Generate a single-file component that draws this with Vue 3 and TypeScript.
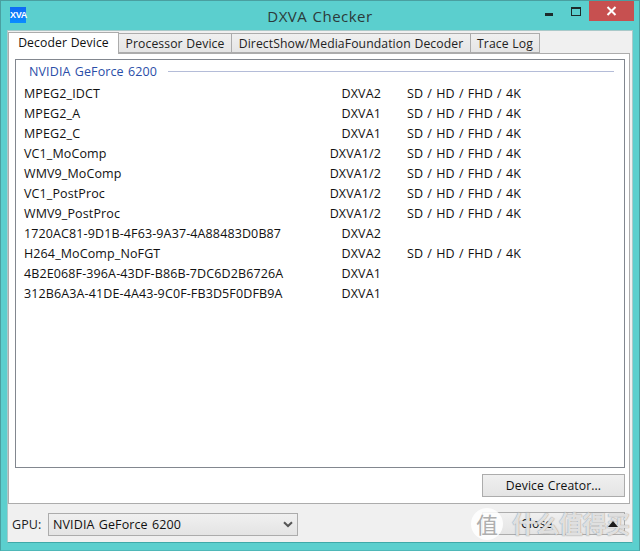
<template>
  <div class="window">
    <div class="titlebar">
      <div class="app-icon">XVA</div>
      <div class="title">DXVA Checker</div>
      <div class="controls">
        <span class="ctl-min"></span>
        <span class="ctl-max"></span>
        <span class="ctl-close">
          <svg width="11" height="10" viewBox="0 0 11 10">
            <path d="M1.5 1 L9.5 9 M9.5 1 L1.5 9" stroke="#fff" stroke-width="2" fill="none" />
          </svg>
        </span>
      </div>
    </div>
    <div class="client">
      <div class="tabs">
        <div
          v-for="(tab, i) in tabs"
          :key="tab"
          class="tab"
          :class="{ active: i === 0 }"
        >
          {{ tab }}
        </div>
      </div>
      <div class="panel">
        <div class="list-box">
          <div class="group-head">
            <span class="group-name">NVIDIA GeForce 6200</span>
            <span class="group-line"></span>
          </div>
          <div v-for="row in rows" :key="row.name" class="row">
            <span class="col-name">{{ row.name }}</span>
            <span class="col-api">{{ row.api }}</span>
            <span class="col-res">{{ row.res ? resText : '' }}</span>
          </div>
        </div>
        <div class="panel-foot">
          <button class="btn creator">Device Creator...</button>
        </div>
      </div>
      <div class="bottom">
        <span class="gpu-label">GPU:</span>
        <div class="select">
          <span>NVIDIA GeForce 6200</span>
          <svg width="10" height="7" viewBox="0 0 10 7">
            <path d="M1 1.2 L5 5 L9 1.2" stroke="#555" stroke-width="2" fill="none" />
          </svg>
        </div>
        <button class="btn close">Close</button>
      </div>
    </div>
    <div class="watermark">
      <span class="wm-circle">值</span>
      <span class="wm-text">什么值得买</span>
      <svg class="wm-mark" width="10" height="6" viewBox="0 0 10 6">
        <path d="M0 6 L5 0 L10 6 Z" fill="#1c1c1c" />
      </svg>
    </div>
  </div>
</template>

<script setup lang="ts">
interface Row {
  name: string
  api: string
  res: boolean
}

const tabs = [
  'Decoder Device',
  'Processor Device',
  'DirectShow/MediaFoundation Decoder',
  'Trace Log',
]

const resText = 'SD / HD / FHD / 4K'

const rows: Row[] = [
  { name: 'MPEG2_IDCT', api: 'DXVA2', res: true },
  { name: 'MPEG2_A', api: 'DXVA1', res: true },
  { name: 'MPEG2_C', api: 'DXVA1', res: true },
  { name: 'VC1_MoComp', api: 'DXVA1/2', res: true },
  { name: 'WMV9_MoComp', api: 'DXVA1/2', res: true },
  { name: 'VC1_PostProc', api: 'DXVA1/2', res: true },
  { name: 'WMV9_PostProc', api: 'DXVA1/2', res: true },
  { name: '1720AC81-9D1B-4F63-9A37-4A88483D0B87', api: 'DXVA2', res: false },
  { name: 'H264_MoComp_NoFGT', api: 'DXVA2', res: true },
  { name: '4B2E068F-396A-43DF-B86B-7DC6D2B6726A', api: 'DXVA1', res: false },
  { name: '312B6A3A-41DE-4A43-9C0F-FB3D5F0DFB9A', api: 'DXVA1', res: false },
]
</script>

<style>
html,
body {
  margin: 0;
  background: #5bcfce;
}
</style>

<style scoped>
.window {
  position: relative;
  width: 640px;
  height: 551px;
  box-sizing: border-box;
  background: #5bcfce;
  border: 1px solid #4a9fa0;
  border-bottom-color: #4fb8b8;
  padding: 0 6px 7px;
  display: flex;
  flex-direction: column;
  overflow: hidden;
  font-family: "Open Sans", "Noto Sans CJK SC", sans-serif;
  font-size: 12.5px;
  letter-spacing: 0.12px;
  word-spacing: 0.8px;
  color: #111;
}

.titlebar {
  height: 29px;
  flex-shrink: 0;
  display: flex;
  align-items: flex-start;
  position: relative;
}

.app-icon {
  width: 16px;
  height: 16px;
  margin: 6px 0 0 3px;
  background: linear-gradient(#0f6af5, #0a8cff);
  color: #fff;
  font: bold 9px/16px "Liberation Sans", sans-serif;
  letter-spacing: -0.3px;
  text-align: center;
}

.title {
  position: absolute;
  left: 0;
  right: 0;
  top: 5px;
  text-align: center;
  font-size: 15px;
  line-height: 20px;
  color: #2c3a3a;
  letter-spacing: 0.5px;
}

.controls {
  margin-left: auto;
  margin-right: -1px;
  display: flex;
  align-items: flex-start;
  position: relative;
}

.ctl-min {
  width: 8px;
  height: 3px;
  margin-top: 12px;
  margin-right: 18px;
  background: #1d2b2b;
}

.ctl-max {
  width: 8px;
  height: 6px;
  margin-top: 6px;
  margin-right: 8px;
  border: 1px solid #1d2b2b;
  border-top-width: 2px;
}

.ctl-close {
  width: 45px;
  height: 20px;
  background: #c75050;
  display: flex;
  align-items: center;
  justify-content: center;
}

.client {
  flex: 1;
  display: flex;
  flex-direction: column;
  background: #f0f0f0;
  border: 1px solid #a9c9c9;
  border-bottom-color: #3fa9a9;
  min-height: 0;
}

.tabs {
  display: flex;
  align-items: flex-end;
  height: 22px;
  flex-shrink: 0;
  position: relative;
  z-index: 1;
}

.tab {
  height: 20px;
  box-sizing: border-box;
  font-size: 12.2px;
  letter-spacing: 0.1px;
  word-spacing: 0.4px;
  line-height: 19px;
  text-align: center;
  background: linear-gradient(#f0f0f0, #e5e5e5);
  border: 1px solid #acacac;
  margin-left: -1px;
  color: #222;
  white-space: nowrap;
}

.tab:nth-child(1) {
  width: 111px;
}

.tab:nth-child(2) {
  width: 114px;
}

.tab:nth-child(3) {
  width: 240px;
}

.tab:nth-child(4) {
  width: 70px;
}

.tab.active {
  height: 22px;
  margin-left: 0;
  margin-bottom: -1px;
  line-height: 20px;
  background: #fff;
  border-bottom: none;
  color: #111;
  position: relative;
  z-index: 2;
}

.panel {
  height: 451px;
  flex-shrink: 0;
  width: 622px;
  box-sizing: border-box;
  background: #fff;
  border: 1px solid #acacac;
  padding: 5px 4px 0 6px;
  display: flex;
  flex-direction: column;
}

.list-box {
  height: 409px;
  box-sizing: border-box;
  border: 1px solid #82878f;
  padding: 0 10px 0 8px;
}

.group-head {
  display: flex;
  align-items: center;
  height: 22px;
  margin-bottom: 2px;
}

.group-name {
  color: #2a4ea8;
  margin-left: 5px;
}

.group-line {
  flex: 1;
  height: 1px;
  margin-left: 11px;
  background: #b4bcd8;
}

.row {
  display: flex;
  height: 20px;
  line-height: 20px;
  white-space: nowrap;
}

.col-name {
  width: 300px;
  flex-shrink: 0;
}

.col-api {
  width: 57px;
  text-align: right;
  flex-shrink: 0;
}

.col-res {
  margin-left: 26px;
}

.panel-foot {
  display: flex;
  justify-content: flex-end;
  padding-top: 6px;
}

.btn {
  font: inherit;
  font-size: 12.2px;
  letter-spacing: 0.1px;
  word-spacing: 0.4px;
  color: #111;
  background: linear-gradient(#f0f0f0, #e4e4e4);
  border: 1px solid #acacac;
  padding: 0;
}

.creator {
  width: 143px;
  height: 23px;
}

.bottom {
  flex: 1;
  display: flex;
  align-items: center;
  padding: 2px 7px 0 4px;
}

.gpu-label {
  width: 36px;
  color: #222;
}

.select {
  width: 250px;
  height: 23px;
  box-sizing: border-box;
  border: 1px solid #acacac;
  background: linear-gradient(#f0f0f0, #e4e4e4);
  display: flex;
  align-items: center;
  justify-content: space-between;
  padding: 0 4px 0 4px;
}

.close {
  width: 143px;
  height: 23px;
  margin-left: auto;
  margin-top: -2px;
  text-align: left;
  padding-left: 38px;
}

.watermark {
  position: absolute;
  left: 470px;
  top: 507px;
  width: 162px;
  height: 32px;
  display: flex;
  align-items: center;
  gap: 9px;
  pointer-events: none;
}

.wm-circle {
  width: 32px;
  height: 32px;
  flex-shrink: 0;
  border-radius: 50%;
  background: rgba(255, 255, 255, 0.85);
  color: #aeaeae;
  font-size: 22px;
  line-height: 32px;
  text-align: center;
}

.wm-text {
  color: rgba(255, 255, 255, 0.72);
  font-size: 24px;
  font-weight: 700;
  line-height: 32px;
  letter-spacing: -0.5px;
  white-space: nowrap;
  text-shadow:
    0 0 1px rgba(140, 140, 140, 0.9),
    0 0 1px rgba(140, 140, 140, 0.6);
}

.wm-mark {
  position: absolute;
  left: 137px;
  top: 13px;
}
</style>
